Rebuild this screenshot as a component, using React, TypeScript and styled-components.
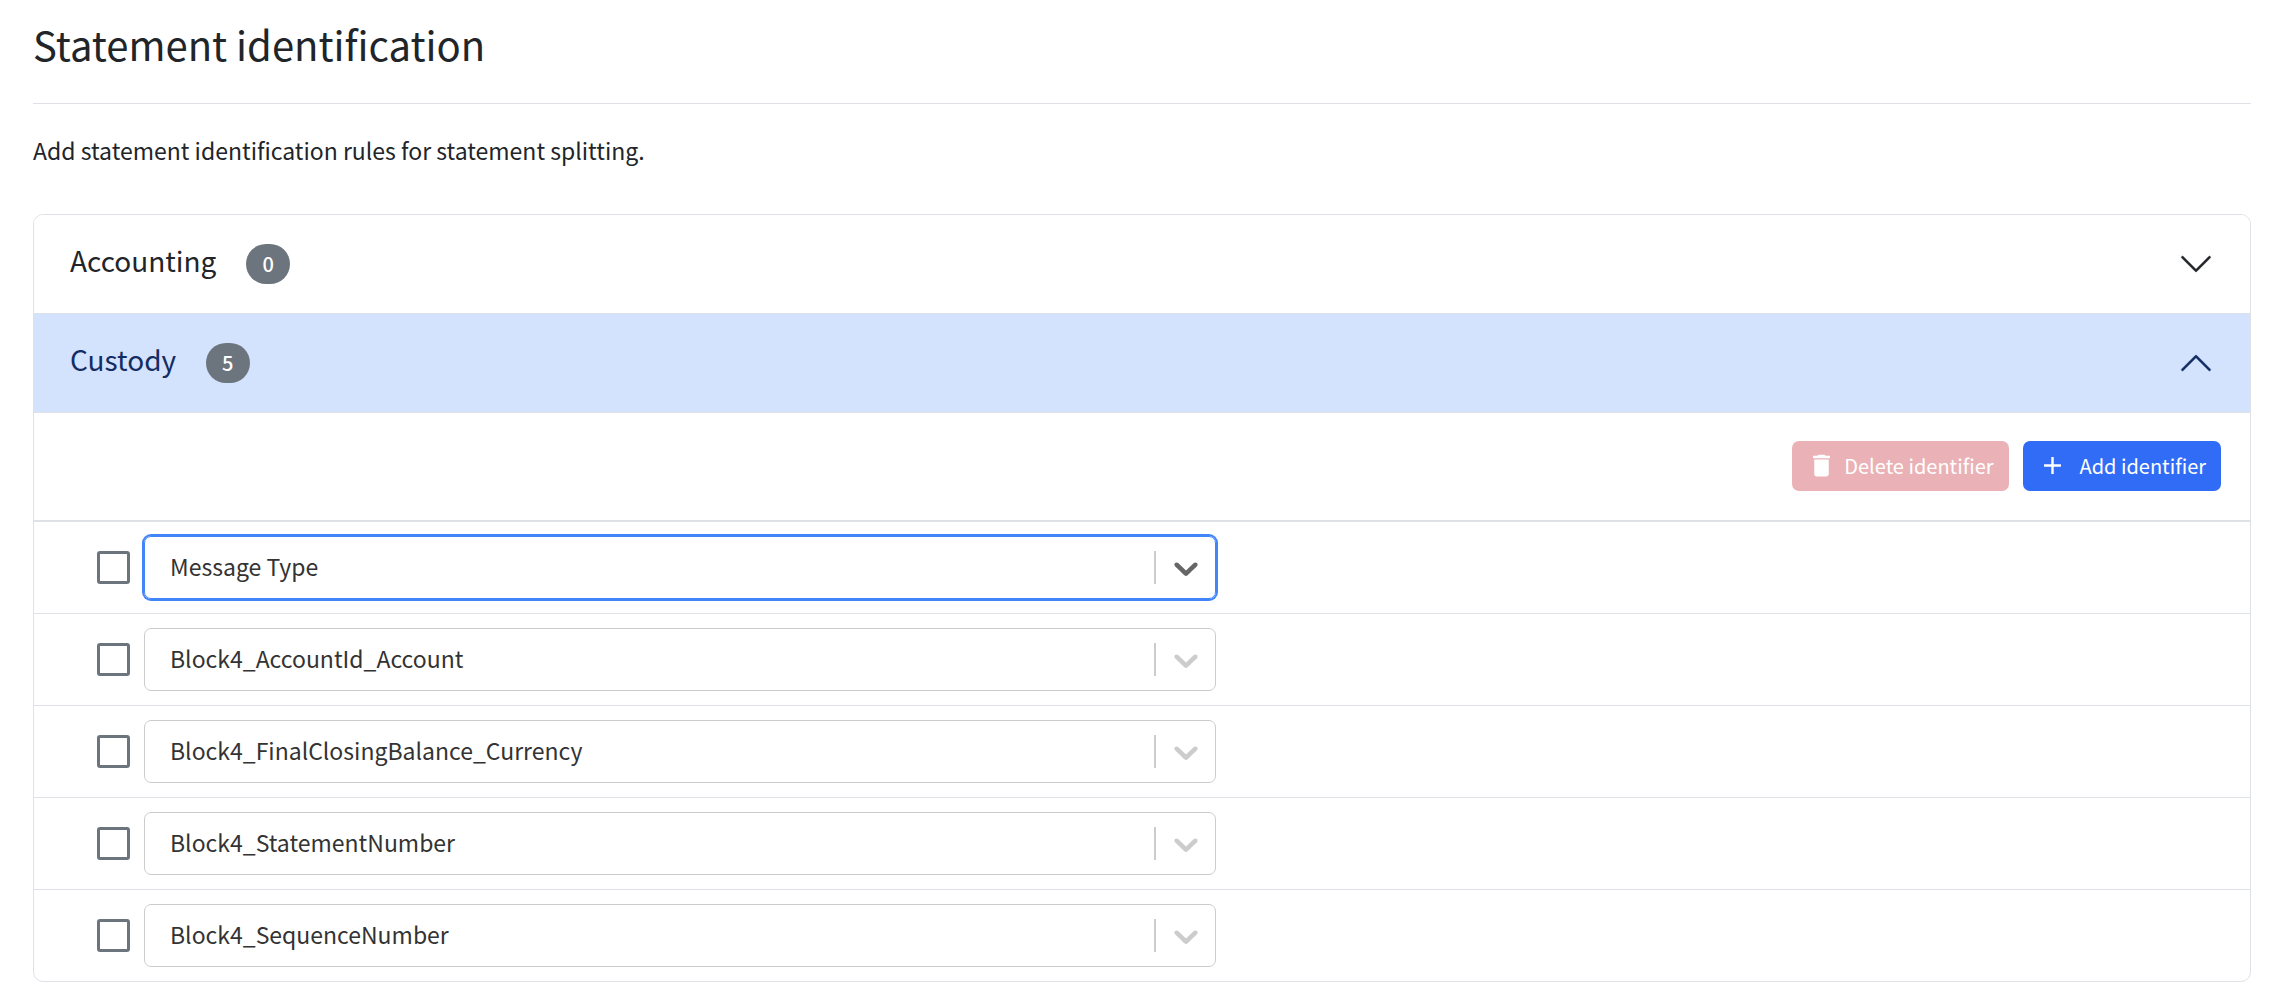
import React, { useId, useState } from "react";
import styled, { createGlobalStyle, css } from "styled-components";
import { MdAdd, MdDelete } from "react-icons/md";

const GlobalStyle = createGlobalStyle`
  *, *::before, *::after { box-sizing: border-box; }
  body {
    margin: 0;
    background: #fff;
    color: #212529;
    font-family: "Noto Sans CJK SC", "Noto Sans", sans-serif;
    font-size: 23px;
    line-height: 36px;
  }
  button, select, input { font: inherit; }
`;

const Page = styled.main`
  padding: 16px 19px 22px 33px;
`;

const Title = styled.h1`
  margin: 0;
  padding: 4px 0 35px;
  border-bottom: 1px solid #dee2e6;
  font-size: 40px;
  font-weight: 400;
  line-height: 48px;
`;

const Intro = styled.p`
  margin: 0;
  padding: 28px 0 46px;
`;

const Accordion = styled.div`
  border: 1px solid #dee2e6;
  border-radius: 10px;
  overflow: hidden;
`;

const SectionHeading = styled.h2`
  margin: 0;
  font-weight: 400;
`;

const SectionToggle = styled.button<{ $open: boolean }>`
  display: flex;
  align-items: center;
  width: 100%;
  height: 99px;
  padding: 0 36px;
  border: 0;
  border-bottom: 1px solid #dee2e6;
  background: ${(p) => (p.$open ? "#d3e2fd" : "#fff")};
  color: ${(p) => (p.$open ? "#132c62" : "#212529")};
  text-align: left;
  cursor: pointer;
`;

const SectionName = styled.span`
  padding-bottom: 8px;
  font-size: 28px;
  line-height: 40px;
`;

const Badge = styled.span`
  margin-left: 30px;
  padding: 0 16px;
  border-radius: 20px;
  background: #6c757d;
  color: #fff;
  font-size: 20px;
  font-weight: 500;
  line-height: 40px;
`;

const ToggleIcon = styled.svg<{ $open: boolean }>`
  width: 36px;
  height: 36px;
  margin-left: auto;
  ${(p) => p.$open && css`transform: rotate(180deg);`}
`;

const Toolbar = styled.div`
  display: flex;
  justify-content: flex-end;
  gap: 14px;
  padding: 28px 29px 29px;
  border-bottom: 2px solid #dee2e6;
`;

const ActionButton = styled.button<{ $tone: "danger" | "primary" }>`
  display: flex;
  align-items: center;
  gap: ${(p) => (p.$tone === "danger" ? "8px" : "13px")};
  height: 50px;
  padding: 0 15px 1px;
  border: 0;
  border-radius: 7px;
  background: ${(p) => (p.$tone === "danger" ? "#eab2b6" : "#306cf6")};
  color: #fff;
  font-size: 20px;
  cursor: ${(p) => (p.disabled ? "default" : "pointer")};
`;

const RuleList = styled.ul`
  margin: 0;
  padding: 0;
  list-style: none;
`;

const Rule = styled.li`
  display: flex;
  align-items: center;
  gap: 14px;
  padding: 14px 0 14px 63px;

  & + & { border-top: 1px solid #dee2e6; }
`;

const Checkbox = styled.input`
  appearance: none;
  width: 33px;
  height: 33px;
  margin: 0;
  border: 3px solid #6c757d;
  border-radius: 3px;
  background: #fff;

  &:checked { background: #6c757d; box-shadow: inset 0 0 0 4px #fff; }
`;

const SelectControl = styled.div<{ $focused: boolean }>`
  display: grid;
  flex: 0 1 1072px;
  align-items: center;
  height: 63px;
  border: 1px solid ${(p) => (p.$focused ? "#4284f9" : "#ccc")};
  border-radius: 7px;
  box-shadow: ${(p) => (p.$focused ? "0 0 0 2px #4284f9" : "none")};
`;

const SelectField = styled.select`
  grid-area: 1 / 1;
  appearance: none;
  width: 100%;
  height: 61px;
  padding: 0 72px 3px 25px;
  border: 0;
  border-radius: 6px;
  outline: 0;
  background: transparent;
  color: #333;
`;

const Indicator = styled.span<{ $focused: boolean }>`
  grid-area: 1 / 1;
  justify-self: end;
  display: flex;
  padding: 0 9px 0 10px;
  height: 33px;
  align-items: center;
  border-left: 2px solid #ccc;
  color: ${(p) => (p.$focused ? "#666" : "#ccc")};
  pointer-events: none;
`;

const fields = [
  "Message Type",
  "Block4_AccountId_Account",
  "Block4_FinalClosingBalance_Currency",
  "Block4_StatementNumber",
  "Block4_SequenceNumber",
];

function SectionHeader(props: {
  name: string;
  count: number;
  open: boolean;
  onToggle: () => void;
}) {
  return (
    <SectionHeading>
      <SectionToggle type="button" $open={props.open} aria-expanded={props.open} onClick={props.onToggle}>
        <SectionName>{props.name}</SectionName>
        <Badge>{props.count}</Badge>
        <ToggleIcon $open={props.open} viewBox="0 0 16 16" fill="currentColor" aria-hidden="true">
          <path
            stroke="currentColor"
            strokeWidth="0.2"
            fillRule="evenodd"
            d="M1.646 4.646a.5.5 0 0 1 .708 0L8 10.293l5.646-5.647a.5.5 0 0 1 .708.708l-6 6a.5.5 0 0 1-.708 0l-6-6a.5.5 0 0 1 0-.708z"
          />
        </ToggleIcon>
      </SectionToggle>
    </SectionHeading>
  );
}

function IdentifierRule(props: { value: string; focused: boolean; onFocus: () => void }) {
  const id = useId();
  const [value, setValue] = useState(props.value);
  return (
    <Rule>
      <Checkbox type="checkbox" aria-label={`Select ${value}`} />
      <SelectControl $focused={props.focused}>
        <SelectField
          id={id}
          aria-label="Identifier"
          value={value}
          onFocus={props.onFocus}
          onChange={(e) => setValue(e.target.value)}
        >
          {fields.map((field) => (
            <option key={field}>{field}</option>
          ))}
        </SelectField>
        <Indicator $focused={props.focused}>
          <svg width="40" height="40" viewBox="0 0 20 20" fill="currentColor" aria-hidden="true">
            <path d="M4.516 7.548c0.436-0.446 1.043-0.481 1.576 0l3.908 3.747 3.908-3.747c0.533-0.481 1.141-0.446 1.574 0 0.436 0.445 0.408 1.197 0 1.615-0.406 0.418-4.695 4.502-4.695 4.502-0.217 0.223-0.502 0.335-0.787 0.335s-0.57-0.112-0.789-0.335c0 0-4.287-4.084-4.695-4.502s-0.436-1.17 0-1.615z" />
          </svg>
        </Indicator>
      </SelectControl>
    </Rule>
  );
}

export default function App() {
  const [accountingOpen, setAccountingOpen] = useState(false);
  const [custodyOpen, setCustodyOpen] = useState(true);
  const [focusedRule, setFocusedRule] = useState(0);

  return (
    <>
      <GlobalStyle />
      <Page>
        <Title>Statement identification</Title>
        <Intro>Add statement identification rules for statement splitting.</Intro>
        <Accordion>
          <SectionHeader
            name="Accounting"
            count={0}
            open={accountingOpen}
            onToggle={() => setAccountingOpen(!accountingOpen)}
          />
          <SectionHeader
            name="Custody"
            count={fields.length}
            open={custodyOpen}
            onToggle={() => setCustodyOpen(!custodyOpen)}
          />
          {custodyOpen && (
            <>
              <Toolbar>
                <ActionButton type="button" $tone="danger" disabled>
                  <MdDelete size={29} aria-hidden="true" />
                  Delete identifier
                </ActionButton>
                <ActionButton type="button" $tone="primary">
                  <MdAdd size={29} aria-hidden="true" />
                  Add identifier
                </ActionButton>
              </Toolbar>
              <RuleList>
                {fields.map((field, index) => (
                  <IdentifierRule
                    key={field}
                    value={field}
                    focused={index === focusedRule}
                    onFocus={() => setFocusedRule(index)}
                  />
                ))}
              </RuleList>
            </>
          )}
        </Accordion>
      </Page>
    </>
  );
}
